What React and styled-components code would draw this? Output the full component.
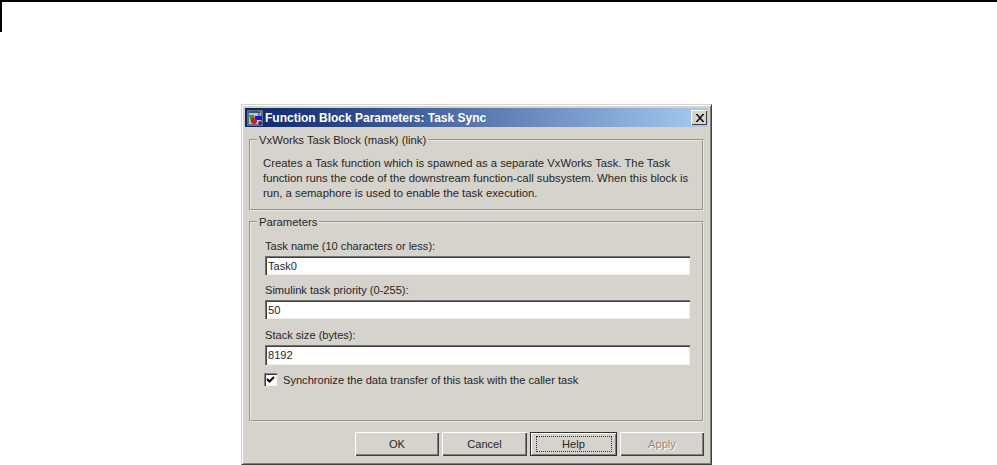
import styled, { createGlobalStyle } from "styled-components";

const GlobalStyle = createGlobalStyle`
    body {
        margin: 0;
        background: #fff;
        font-family: "Liberation Sans", Arial, sans-serif;
    }
`;

const PageRule = styled.div`
    height: 2px;
    background: #000;
`;

const PageTick = styled.div`
    width: 2px;
    height: 30px;
    background: #000;
`;

const Dialog = styled.div`
    box-sizing: border-box;
    width: 471px;
    height: 361px;
    margin: 72px 0 0 241px;
    padding: 3px;
    background: #d6d3cc;
    border: 1px solid;
    border-color: #d6d3cc #404040 #404040 #d6d3cc;
    box-shadow: inset 1px 1px 0 #fff, inset -1px -1px 0 #808080;
    font-size: 11.1px;
    color: #262626;
`;

const TitleBar = styled.div`
    display: flex;
    align-items: center;
    height: 19px;
    padding: 0 1px 0 2px;
    gap: 2px;
    background: linear-gradient(90deg, #0a246a 0%, #a6caf0 100%);
`;

const TitleText = styled.span`
    flex: 1;
    color: #fff;
    font-weight: bold;
    font-size: 12px;
`;

const CloseButton = styled.div`
    box-sizing: border-box;
    width: 16px;
    height: 15px;
    display: flex;
    align-items: center;
    justify-content: center;
    background: #d6d3cc;
    box-shadow: inset 1px 1px 0 #fff, inset -1px -1px 0 #404040;
`;

const Group = styled.fieldset`
    box-sizing: border-box;
    height: ${(p) => p.$height}px;
    margin: ${(p) => p.$top}px 4px 0 4px;
    padding: 0;
    min-width: 0;
    border: 2px groove #e8e6e0;
`;

const GroupTitle = styled.legend`
    margin-left: 6px;
    padding: 0 2px;
    font-size: 11.3px;
    line-height: 14px;
`;

const GroupBody = styled.div`
    padding: ${(p) => p.$pad};
`;

const Description = styled.p`
    margin: 0;
    font-size: 11.3px;
    line-height: 15px;
    white-space: nowrap;
`;

const FieldLabel = styled.label`
    display: block;
    height: 14px;
    line-height: 14px;
    margin-top: ${(p) => p.$top}px;
`;

const TextField = styled.div`
    box-sizing: border-box;
    height: ${(p) => p.$height}px;
    margin-top: 3px;
    padding: 0 0 0 3px;
    display: flex;
    align-items: center;
    background: #fff;
    box-shadow: inset 1px 1px 0 #707070, inset 2px 2px 0 #404040, inset -1px -1px 0 #f0eee8;
`;

const CheckRow = styled.div`
    display: flex;
    align-items: center;
    gap: 6px;
    margin: 8px 0 0 -1px;
    height: 13px;
`;

const CheckBox = styled.div`
    box-sizing: border-box;
    width: 13px;
    height: 13px;
    display: flex;
    align-items: center;
    justify-content: center;
    background: #fff;
    box-shadow: inset 1px 1px 0 #808080, inset 2px 2px 0 #404040, inset -1px -1px 0 #f4f2ee;
`;

const ButtonRow = styled.div`
    display: flex;
    justify-content: flex-end;
    gap: 3px;
    margin: 10px 4px 0 0;
`;

const Button = styled.div`
    box-sizing: border-box;
    width: ${(p) => p.$width}px;
    height: 24px;
    display: flex;
    align-items: center;
    justify-content: center;
    color: ${(p) => (p.$disabled ? "#8c8a84" : "#262626")};
    text-shadow: ${(p) => (p.$disabled ? "1px 1px 0 #fff" : "none")};
    box-shadow: ${(p) =>
        p.$focused
            ? "inset 0 0 0 1px #303030, inset 1px 1px 0 1px #fff, inset -1px -1px 0 1px #808080"
            : "inset 1px 1px 0 #fff, inset -1px -1px 0 #404040, inset -2px -2px 0 #808080"};
`;

const FocusRing = styled.div`
    box-sizing: border-box;
    width: 76px;
    height: 16px;
    display: flex;
    align-items: center;
    justify-content: center;
    border: 1px dotted #303030;
`;

function AppIcon() {
    return (
        <svg width="16" height="16" viewBox="0 0 16 16">
            <rect x="0" y="0" width="16" height="16" fill="#5f7088" />
            <rect x="2" y="3" width="12" height="11" fill="#b9c4cc" />
            <path d="M2 2 H12 V7" stroke="#1d3a4a" strokeWidth="1" fill="none" />
            <path d="M2 5 L7 5 L8 11 L4 12 Z" fill="#2f9a3a" />
            <rect x="8" y="6" width="7" height="4" fill="#1414e0" />
            <circle cx="7" cy="11" r="3" fill="#d81818" />
            <path d="M11 13 H15 M13 11 V15" stroke="#000" strokeWidth="1" />
        </svg>
    );
}

function CloseIcon() {
    return (
        <svg width="9" height="8" viewBox="0 0 9 8">
            <path d="M1 0 L8 8 M2 0 L9 8 M8 0 L1 8 M9 0 L2 8" stroke="#000" strokeWidth="1" fill="none" />
        </svg>
    );
}

function CheckMark() {
    return (
        <svg width="9" height="9" viewBox="0 0 9 9">
            <path d="M1 4 L3.5 6.5 L8 2" stroke="#000" strokeWidth="2" fill="none" />
        </svg>
    );
}

export default function App() {
    return (
        <>
            <GlobalStyle />
            <PageRule />
            <PageTick />
            <Dialog>
                <TitleBar>
                    <AppIcon />
                    <TitleText>Function Block Parameters: Task Sync</TitleText>
                    <CloseButton>
                        <CloseIcon />
                    </CloseButton>
                </TitleBar>
                <Group $height={78} $top={6}>
                    <GroupTitle>VxWorks Task Block (mask) (link)</GroupTitle>
                    <GroupBody $pad="9px 12px 0 12px">
                        <Description>
                            Creates a Task function which is spawned as a separate VxWorks Task. The Task
                            <br />
                            function runs the code of the downstream function-call subsystem. When this block is
                            <br />
                            run, a semaphore is used to enable the task execution.
                        </Description>
                    </GroupBody>
                </Group>
                <Group $height={207} $top={4}>
                    <GroupTitle>Parameters</GroupTitle>
                    <GroupBody $pad="10px 12px 0 14px">
                        <FieldLabel $top={0}>Task name (10 characters or less):</FieldLabel>
                        <TextField $height={19}>Task0</TextField>
                        <FieldLabel $top={8}>Simulink task priority (0-255):</FieldLabel>
                        <TextField $height={19}>50</TextField>
                        <FieldLabel $top={9}>Stack size (bytes):</FieldLabel>
                        <TextField $height={20}>8192</TextField>
                        <CheckRow>
                            <CheckBox>
                                <CheckMark />
                            </CheckBox>
                            Synchronize the data transfer of this task with the caller task
                        </CheckRow>
                    </GroupBody>
                </Group>
                <ButtonRow>
                    <Button $width={84}>OK</Button>
                    <Button $width={85}>Cancel</Button>
                    <Button $width={87} $focused>
                        <FocusRing>Help</FocusRing>
                    </Button>
                    <Button $width={84} $disabled>
                        Apply
                    </Button>
                </ButtonRow>
            </Dialog>
        </>
    );
}
